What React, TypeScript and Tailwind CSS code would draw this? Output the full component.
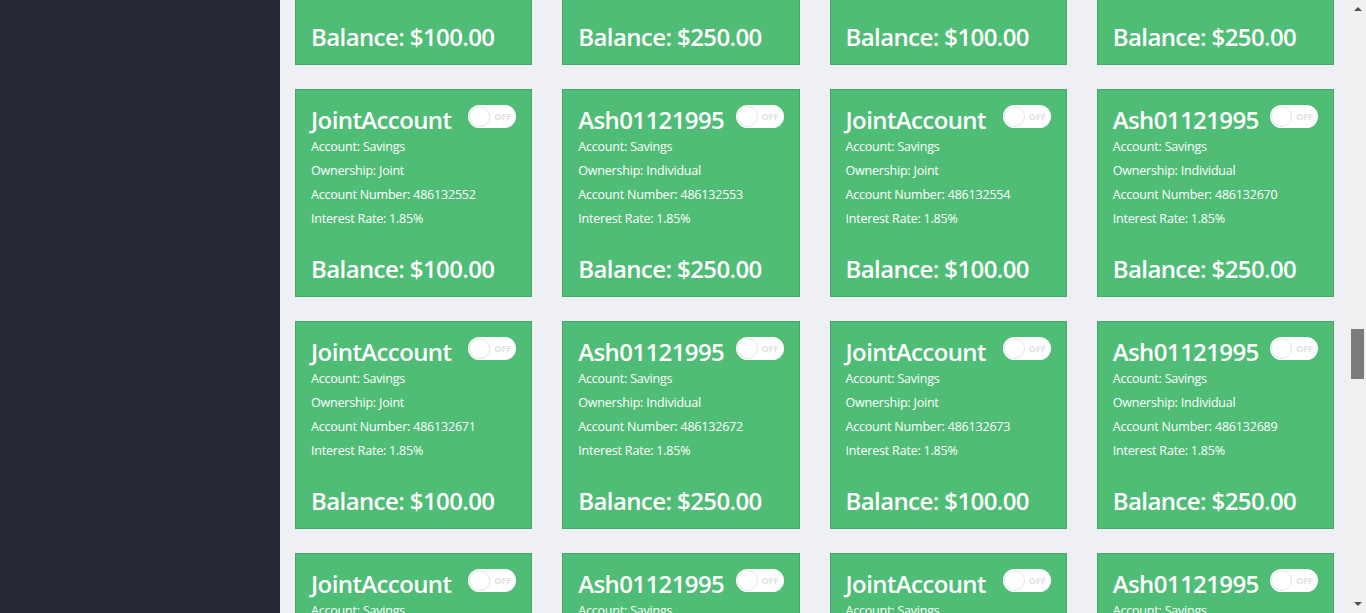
import React from 'react';

type Account = {
  name: string;
  ownership: string;
  number: string;
  balance: string;
};

const rows: Account[][] = [
  [
    { name: 'JointAccount', ownership: 'Joint', number: '486132550', balance: '$100.00' },
    { name: 'Ash01121995', ownership: 'Individual', number: '486132551', balance: '$250.00' },
    { name: 'JointAccount', ownership: 'Joint', number: '486132548', balance: '$100.00' },
    { name: 'Ash01121995', ownership: 'Individual', number: '486132549', balance: '$250.00' },
  ],
  [
    { name: 'JointAccount', ownership: 'Joint', number: '486132552', balance: '$100.00' },
    { name: 'Ash01121995', ownership: 'Individual', number: '486132553', balance: '$250.00' },
    { name: 'JointAccount', ownership: 'Joint', number: '486132554', balance: '$100.00' },
    { name: 'Ash01121995', ownership: 'Individual', number: '486132670', balance: '$250.00' },
  ],
  [
    { name: 'JointAccount', ownership: 'Joint', number: '486132671', balance: '$100.00' },
    { name: 'Ash01121995', ownership: 'Individual', number: '486132672', balance: '$250.00' },
    { name: 'JointAccount', ownership: 'Joint', number: '486132673', balance: '$100.00' },
    { name: 'Ash01121995', ownership: 'Individual', number: '486132689', balance: '$250.00' },
  ],
  [
    { name: 'JointAccount', ownership: 'Joint', number: '486132690', balance: '$100.00' },
    { name: 'Ash01121995', ownership: 'Individual', number: '486132691', balance: '$250.00' },
    { name: 'JointAccount', ownership: 'Joint', number: '486132692', balance: '$100.00' },
    { name: 'Ash01121995', ownership: 'Individual', number: '486132693', balance: '$250.00' },
  ],
];

function Toggle() {
  return (
    <div className="flex h-[23px] w-[48px] shrink-0 items-center rounded-full bg-white p-[1px]">
      <div className="h-[21px] w-[21px] rounded-full border border-[#e4e4e4] bg-white" />
      <span className="ml-[4px] text-[9px] font-bold leading-none text-[#e2e2e2]">OFF</span>
    </div>
  );
}

function AccountCard({ account }: { account: Account }) {
  return (
    <div className="flex h-[208px] flex-col border border-[#44a965] bg-[#4fbd75] px-[15px] pt-[15px] text-white">
      <div className="flex items-start justify-between">
        <h3 className="text-[24px] font-semibold leading-[29px] tracking-[-0.6px]">{account.name}</h3>
        <Toggle />
      </div>
      <div className="mt-[1px] text-[12.5px] leading-[24px] tracking-[-0.2px]">
        <p>Account: Savings</p>
        <p>Ownership: {account.ownership}</p>
        <p>Account Number: {account.number}</p>
        <p>Interest Rate: 1.85%</p>
      </div>
      <p className="mt-[23px] text-[24px] font-semibold leading-[29px] tracking-[-0.6px]">
        Balance: {account.balance}
      </p>
    </div>
  );
}

export default function App() {
  return (
    <div
      className="flex h-[613px] w-full overflow-hidden"
      style={{ fontFamily: '"Open Sans", "Noto Sans", sans-serif' }}
    >
      <aside className="w-[280px] shrink-0 bg-[#252933]" />

      <main className="flex-1 overflow-hidden bg-[#eff0f5]">
        <div className="-mt-[143px] grid grid-cols-4 gap-x-[30px] gap-y-[24px] px-[15px]">
          {rows.flat().map((account, i) => (
            <AccountCard key={i} account={account} />
          ))}
        </div>
      </main>

      <div className="flex w-[17px] shrink-0 flex-col items-center bg-[#f1f1f1]">
        <div className="mt-[7px] h-0 w-0 border-x-[4px] border-b-[4px] border-x-transparent border-b-[#505050]" />
        <div className="mt-[318px] h-[50px] w-[13px] bg-[#7b7b7b]" />
        <div className="mt-auto mb-[7px] h-0 w-0 border-x-[4px] border-t-[4px] border-x-transparent border-t-[#505050]" />
      </div>
    </div>
  );
}
